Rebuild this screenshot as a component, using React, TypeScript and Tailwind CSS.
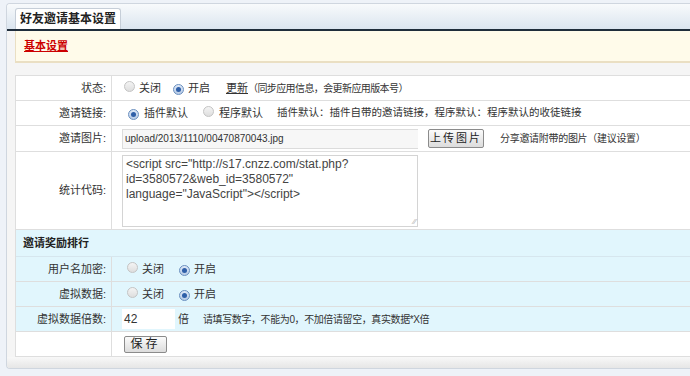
import React from "react";

const font = { fontFamily: '"Liberation Sans", "Noto Sans CJK SC", sans-serif' };

function Radio({ on }: { on?: boolean }) {
  return (
    <span
      className={`inline-flex items-center justify-center w-[11px] h-[11px] rounded-full border ${
        on ? "border-[#6a8fbf] bg-gradient-to-b from-[#dfe9f7] to-[#b7cbe6]" : "border-[#c4c4c4] bg-gradient-to-b from-[#f4f4f4] to-[#dedede]"
      }`}
    >
      {on && <span className="w-[5px] h-[5px] rounded-full bg-[#2f5fa8]" />}
    </span>
  );
}

function Row({
  label,
  children,
  cyan,
  h = 25,
}: {
  label: string;
  children?: React.ReactNode;
  cyan?: boolean;
  h?: number;
}) {
  return (
    <div className={`flex border-b border-[#dedede] ${cyan ? "bg-[#e1f6fd]" : "bg-white"}`} style={{ height: h }}>
      <div className="w-[96px] shrink-0 border-r border-[#dedede] flex items-center justify-end pr-[5px] text-[#333]">
        {label}
      </div>
      <div className="flex-1 flex items-center pl-[10px] text-[#333] whitespace-nowrap">{children}</div>
    </div>
  );
}

export default function App() {
  return (
    <div className="w-[690px] h-[376px] bg-[#eef2f8] pt-[3px] pl-[6px] text-[11px] overflow-hidden" style={font}>
      <div className="h-[366px] border border-[#cfd6df] border-r-0 rounded-l-[4px] bg-[#f5f5f5] flex flex-col overflow-hidden">
        {/* header */}
        <div className="h-[25px] bg-gradient-to-b from-[#f8fafc] to-[#dbe5ef] flex items-end pl-[8px]">
          <div className="h-[21px] px-[4px] bg-white border border-b-0 border-[#c6ced8] rounded-t-[3px] flex items-center font-bold text-[12px] text-[#222]">
            好友邀请基本设置
          </div>
        </div>
        <div className="h-[2px] bg-[#1f2d3b]" />
        {/* notice */}
        <div className="ml-[8px] h-[32px] bg-[#fffbea] border-l border-b-2 border-[#eadfc3] flex items-center pl-[8px]">
          <span className="text-[#c00] font-bold underline">基本设置</span>
        </div>
        <div className="h-[12px]" />
        {/* table */}
        <div className="ml-[8px] border-t border-l border-[#dedede]">
          <Row label="状态:">
            <span className="ml-[2px]"><Radio /></span>
            <span className="ml-[4px]">关闭</span>
            <span className="ml-[12px]"><Radio on /></span>
            <span className="ml-[4px]">开启</span>
            <span className="ml-[16px] underline">更新</span>
            <span className="text-[10px] tracking-[-0.6px]">（同步应用信息，会更新应用版本号）</span>
          </Row>
          <Row label="邀请链接:">
            <span className="ml-[6px]"><Radio on /></span>
            <span className="ml-[5px]">插件默认</span>
            <span className="ml-[15px]"><Radio /></span>
            <span className="ml-[5px]">程序默认</span>
            <span className="ml-[14px] text-[10.5px]">插件默认：插件自带的邀请链接，程序默认：程序默认的收徒链接</span>
          </Row>
          <Row label="邀请图片:" h={26}>
            <div className="w-[296px] h-[20px] border border-[#dcdcdc] border-r-0 bg-[#f7f7f7] flex items-center px-[2px] text-[10px] text-[#333]">
              upload/2013/1110/00470870043.jpg
            </div>
            <button className="ml-[10px] h-[19px] w-[56px] border border-[#8b8b8b] rounded-[2px] bg-gradient-to-b from-[#fbfbfb] to-[#dcdcdc] tracking-[2px] text-[#222] flex items-center justify-center">
              上传图片
            </button>
            <span className="ml-[16px] text-[10px] tracking-[-0.3px]">分享邀请附带的图片（建议设置）</span>
          </Row>
          <Row label="统计代码:" h={78}>
            <div className="w-[296px] h-[72px] border border-[#d4d4d4] bg-white px-[3px] pt-[1px] leading-[15px] text-[12px] text-[#444] relative">
              <div>&lt;script src="http://s17.cnzz.com/stat.php?</div>
              <div>id=3580572&amp;web_id=3580572"</div>
              <div>language="JavaScript"&gt;&lt;/script&gt;</div>
              <span className="absolute right-[1px] bottom-[0px] text-[8px] text-[#aaa] leading-none">⁄⁄</span>
            </div>
          </Row>
          <div className="h-[27px] bg-[#e1f6fd] border-b border-[#d6e6ee] flex items-center pl-[7px] font-bold text-[#222]">
            邀请奖励排行
          </div>
          <Row label="用户名加密:" cyan>
            <span className="ml-[5px]"><Radio /></span>
            <span className="ml-[4px]">关闭</span>
            <span className="ml-[15px]"><Radio on /></span>
            <span className="ml-[4px]">开启</span>
          </Row>
          <Row label="虚拟数据:" cyan>
            <span className="ml-[5px]"><Radio /></span>
            <span className="ml-[4px]">关闭</span>
            <span className="ml-[15px]"><Radio on /></span>
            <span className="ml-[4px]">开启</span>
          </Row>
          <Row label="虚拟数据倍数:" cyan>
            <div className="w-[53px] h-[20px] bg-white flex items-center px-[2px] text-[12px]">42</div>
            <span className="ml-[3px]">倍</span>
            <span className="ml-[14px] text-[10px] tracking-[-0.4px]">请填写数字，不能为0，不加倍请留空，真实数据*X倍</span>
          </Row>
          <Row label="">
            <button className="ml-[2px] h-[17px] w-[43px] border border-[#8b8b8b] rounded-[2px] bg-gradient-to-b from-[#fbfbfb] to-[#dcdcdc] tracking-[3px] text-[12px] text-[#222] flex items-center justify-center">
              保存
            </button>
          </Row>
        </div>
        <div className="flex-1 bg-gradient-to-b from-[#f8f8f8] to-[#e6e6e6]" />
      </div>
    </div>
  );
}
